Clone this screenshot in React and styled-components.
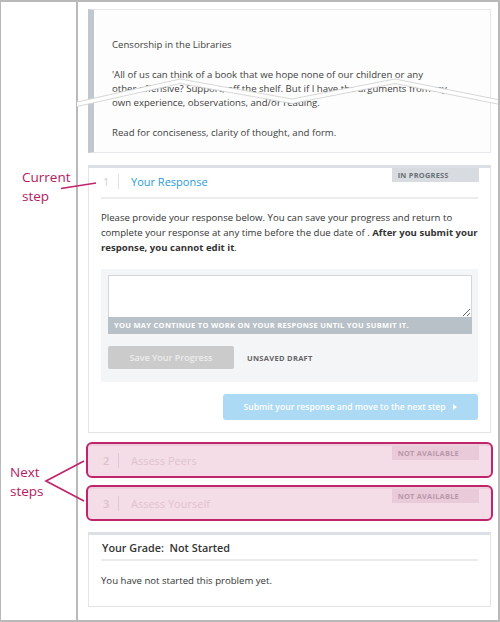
import React from "react";
import styled, { createGlobalStyle } from "styled-components";

const GlobalStyle = createGlobalStyle`
  html, body { margin: 0; padding: 0; background: #fff; }
  body { font-family: "Open Sans", "Liberation Sans", sans-serif; color: #333; }
  * { box-sizing: border-box; }
`;

const MAGENTA = "#c0246a";

const Frame = styled.div`
  position: relative;
  width: 500px;
  height: 622px;
  border: 2px solid #b9b9b9;
  border-left-width: 1px;
  display: grid;
  grid-template-columns: 77px 1fr;
  overflow: hidden;
  background: #fff;
`;

const Gutter = styled.aside`
  border-right: 2px solid #b9b9b9;
`;

const Main = styled.main`
  padding: 7px 8px 0 10px;
  display: flex;
  flex-direction: column;
  & > * { flex-shrink: 0; }
`;

const Callout = styled.div`
  position: absolute;
  left: ${(p) => p.$left}px;
  top: ${(p) => p.$top}px;
  font-size: 13.5px;
  line-height: 19px;
  color: #b51a61;
  white-space: pre-line;
`;

const Overlay = styled.svg`
  position: absolute;
  left: -1px;
  top: -2px;
  width: 500px;
  height: 622px;
  pointer-events: none;
`;

const Prompt = styled.section`
  background: #fdfdfd;
  border: 1px solid #e7e7eb;
  border-left: 6px solid #c1c7ce;
  padding: 28px 14px 12px 18px;
  font-size: 9.6px;
  line-height: 14px;
  color: #3d3d3d;
  p { margin: 0 0 16px; white-space: nowrap; }
  p:last-child { margin-bottom: 0; }
`;

const Card = styled.section`
  margin-top: ${(p) => p.$mt}px;
  background: #fff;
  border: 1px solid #e4e4e4;
  border-top: 3px solid #dcdfe3;
  padding: 0 12px 12px;
`;

const StepCard = styled(Card)`
  ${(p) =>
    p.$highlight &&
    `
    margin-left: -2px;
    margin-right: -2px;
    height: 36px;
    padding: 2px 13px 0;
    background: #f4dde6;
    border: 2px solid ${MAGENTA};
    border-radius: 6px;
    box-shadow: inset 0 2px 0 #ebcfdb;
  `}
`;

const StepHeader = styled.header`
  display: flex;
  align-items: center;
  height: 29px;
  border-bottom: ${(p) => (p.$open ? "2px solid #ececec" : "none")};
  ${(p) => p.$open && "height: 31px; padding-bottom: 2px;"}
`;

const StepNum = styled.span`
  font-size: 11px;
  color: ${(p) => (p.$muted ? "#e0bfcd" : "#cfcfcf")};
  width: 17px;
  padding-left: 2px;
  font-weight: ${(p) => (p.$muted ? 600 : 400)};
`;

const Divider = styled.span`
  width: 1px;
  height: 15px;
  background: ${(p) => (p.$muted ? "#e3c6d3" : "#e2e2e2")};
  margin-right: 12px;
`;

const StepTitle = styled.h2`
  margin: 0;
  font-size: 11px;
  font-weight: 400;
  color: ${(p) => (p.$muted ? "#e2c2d0" : "#2a9ad8")};
`;

const Status = styled.span`
  margin-left: auto;
  margin-right: -1px;
  align-self: flex-start;
  width: 87px;
  height: 14px;
  line-height: 14px;
  padding-left: 6px;
  font-size: 7.4px;
  font-weight: 700;
  letter-spacing: 0.25px;
  text-transform: uppercase;
  background: ${(p) => (p.$muted ? "#e8cad8" : "#d8dce1")};
  color: ${(p) => (p.$muted ? "#b898a8" : "#6a7078")};
`;

const Instructions = styled.p`
  margin: 11px 0 0;
  font-size: 9.6px;
  line-height: 15px;
  color: #333;
  white-space: nowrap;
  strong { font-weight: 700; }
`;

const ResponseArea = styled.div`
  margin-top: 14px;
  background: #f4f5f7;
  padding: 6px 6px 13px 7px;
`;

const Editor = styled.textarea`
  display: block;
  width: 100%;
  height: 42px;
  margin: 0;
  border: 1px solid #d3d6da;
  border-bottom: none;
  background: #fff;
  resize: vertical;
  overflow-y: scroll;
  font: inherit;
  &::-webkit-scrollbar { width: 11px; }
  &::-webkit-scrollbar-track { background: #fff; border-left: 1px solid #e3e3e3; }
  &::-webkit-scrollbar-corner { background: #fff; }
`;

const EditorNote = styled.div`
  height: 17px;
  line-height: 17px;
  background: #b9c1c8;
  color: #fff;
  font-size: 7.5px;
  font-weight: 700;
  letter-spacing: 0.3px;
  padding-left: 6px;
  text-transform: uppercase;
`;

const SaveRow = styled.div`
  margin-top: 12px;
  display: flex;
  align-items: center;
  gap: 13px;
`;

const SaveButton = styled.button`
  width: 126px;
  height: 23px;
  border: none;
  border-radius: 2px;
  background: #cbcbcb;
  color: #ececec;
  font-family: inherit;
  font-size: 9px;
  font-weight: 600;
  padding: 0;
`;

const DraftState = styled.span`
  font-size: 7.5px;
  font-weight: 700;
  letter-spacing: 0.3px;
  color: #666;
  text-transform: uppercase;
`;

const SubmitRow = styled.div`
  margin-top: 12px;
  display: flex;
  justify-content: flex-end;
`;

const SubmitButton = styled.button`
  width: 255px;
  height: 26px;
  border: none;
  border-radius: 3px;
  background: #acd9f3;
  color: #fff;
  font-family: inherit;
  font-size: 8.6px;
  font-weight: 600;
  display: flex;
  align-items: center;
  justify-content: center;
  gap: 7px;
  padding: 0;
`;

const GradeHeader = styled.h3`
  margin: 0;
  height: 26px;
  line-height: 25px;
  font-size: 10.8px;
  font-weight: 600;
  color: #333;
  border-bottom: 2px solid #ececec;
  padding-left: 1px;
  white-space: pre;
`;

const GradeText = styled.p`
  margin: 12px 0 0;
  font-size: 9.6px;
  line-height: 15px;
  padding-bottom: 6px;
  color: #333;
`;

export default function App() {
  return (
    <>
      <GlobalStyle />
      <Frame>
        <Gutter />
        <Main>
          <Prompt>
            <p>Censorship in the Libraries</p>
            <p>
              'All of us can think of a book that we hope none of our children or any
              <br />
              other offensive? Support, off the shelf. But if I have the arguments from my
              <br />
              own experience, observations, and/or reading.
            </p>
            <p>Read for conciseness, clarity of thought, and form.</p>
          </Prompt>

          <StepCard $mt={12}>
            <StepHeader $open>
              <StepNum>1</StepNum>
              <Divider />
              <StepTitle>Your Response</StepTitle>
              <Status>In Progress</Status>
            </StepHeader>
            <Instructions>
              Please provide your response below. You can save your progress and return to
              <br />
              complete your response at any time before the due date of .{" "}
              <strong>After you submit your</strong>
              <br />
              <strong>response, you cannot edit it</strong>.
            </Instructions>
            <ResponseArea>
              <Editor aria-label="Your response" />
              <EditorNote>You may continue to work on your response until you submit it.</EditorNote>
              <SaveRow>
                <SaveButton>Save Your Progress</SaveButton>
                <DraftState>Unsaved Draft</DraftState>
              </SaveRow>
            </ResponseArea>
            <SubmitRow>
              <SubmitButton>
                Submit your response and move to the next step
                <svg width="4" height="6" viewBox="0 0 4 6">
                  <path d="M0 0 L4 3 L0 6 Z" fill="#fff" />
                </svg>
              </SubmitButton>
            </SubmitRow>
          </StepCard>

          <StepCard $mt={9} $highlight>
            <StepHeader>
              <StepNum $muted>2</StepNum>
              <Divider $muted />
              <StepTitle $muted>Assess Peers</StepTitle>
              <Status $muted>Not Available</Status>
            </StepHeader>
          </StepCard>

          <StepCard $mt={7} $highlight>
            <StepHeader>
              <StepNum $muted>3</StepNum>
              <Divider $muted />
              <StepTitle $muted>Assess Yourself</StepTitle>
              <Status $muted>Not Available</Status>
            </StepHeader>
          </StepCard>

          <Card $mt={11}>
            <GradeHeader>Your Grade:  Not Started</GradeHeader>
            <GradeText>You have not started this problem yet.</GradeText>
          </Card>
        </Main>

        <Callout $left={21} $top={166}>{"Current\nstep"}</Callout>
        <Callout $left={9} $top={461}>{"Next\nsteps"}</Callout>

        <Overlay viewBox="0 0 500 622">
          <polygon
            points="77,102 180,79 292,99 395,79 500,100 500,104.5 395,83.5 292,103.5 180,83.5 77,106.5"
            fill="#fff"
          />
          <polyline points="77,102 180,79 292,99 395,79 500,100" fill="none" stroke="#d2d2d2" strokeWidth="0.9" />
          <polyline points="77,106.5 180,83.5 292,103.5 395,83.5 500,104.5" fill="none" stroke="#d2d2d2" strokeWidth="0.9" />
          <line x1="61" y1="188.5" x2="96" y2="183" stroke={MAGENTA} strokeWidth="1.7" />
          <polyline points="84,461 46,481 84,501" fill="none" stroke={MAGENTA} strokeWidth="1.7" />
        </Overlay>
      </Frame>
    </>
  );
}
